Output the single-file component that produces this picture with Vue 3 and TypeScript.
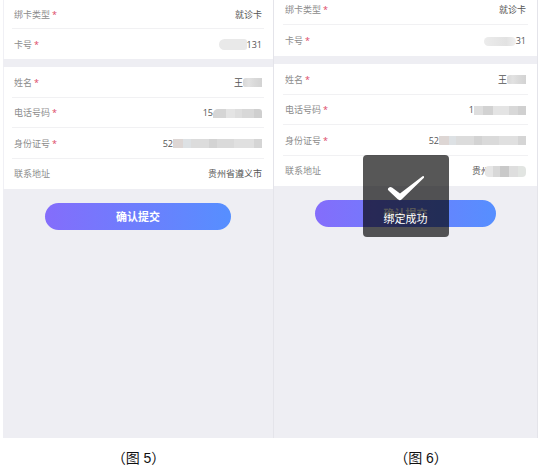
<script setup lang="ts">
interface Field {
  label: string
  value: string
  required?: boolean
  mask?: string
  maskWidth?: number
  maskFirst?: boolean
}

interface Screen {
  id: string
  caption: string
  card: Field[]
  person: Field[]
  toast?: string
}

const screens: Screen[] = [
  {
    id: 'left',
    caption: '（图 5）',
    card: [
      { label: '绑卡类型', value: '就诊卡', required: true },
      { label: '卡号', value: '131', required: true, mask: 'cloud', maskWidth: 28, maskFirst: true },
    ],
    person: [
      { label: '姓名', value: '王', required: true, mask: 'short', maskWidth: 19 },
      { label: '电话号码', value: '15', required: true, mask: 'round', maskWidth: 49 },
      { label: '身份证号', value: '52', required: true, mask: 'long', maskWidth: 89 },
      { label: '联系地址', value: '贵州省遵义市' },
    ],
  },
  {
    id: 'right',
    caption: '（图 6）',
    card: [
      { label: '绑卡类型', value: '就诊卡', required: true },
      { label: '卡号', value: '31', required: true, mask: 'pill', maskWidth: 32, maskFirst: true },
    ],
    person: [
      { label: '姓名', value: '王', required: true, mask: 'short', maskWidth: 19 },
      { label: '电话号码', value: '1', required: true, mask: 'mid', maskWidth: 52 },
      { label: '身份证号', value: '52', required: true, mask: 'long', maskWidth: 87 },
      { label: '联系地址', value: '贵州', mask: 'address', maskWidth: 41 },
    ],
    toast: '绑定成功',
  },
]
</script>

<template>
  <main class="page">
    <figure v-for="screen in screens" :key="screen.id" class="figure" :class="screen.id">
      <section class="screen">
        <dl v-for="(group, index) in [screen.card, screen.person]" :key="index" class="group" :class="index === 0 ? 'card' : 'person'">
          <div v-for="field in group" :key="field.label" class="row">
            <dt>{{ field.label }}<span v-if="field.required" class="star">*</span></dt>
            <dd :class="{ reverse: field.maskFirst }">
              <span>{{ field.value }}</span>
              <i v-if="field.mask" class="mask" :class="field.mask" :style="{ width: field.maskWidth + 'px' }"></i>
            </dd>
          </div>
        </dl>
        <button type="button" class="submit">确认提交</button>
        <div v-if="screen.toast" class="toast" role="status">
          <svg width="38" height="28" viewBox="0 0 38 28" aria-hidden="true">
            <path d="M1 13.5 Q2.5 11 5 12.5 L13 18.5 L35.5 1.2 Q37.5 .5 37 2.8 L14.5 24.5 Q12.5 26 10.5 24 L1.5 15.5 Q.5 14.5 1 13.5Z" fill="#fff" />
          </svg>
          <span>{{ screen.toast }}</span>
        </div>
      </section>
      <figcaption>{{ screen.caption }}</figcaption>
    </figure>
  </main>
</template>

<style>
body {
  margin: 0;
  background: #fff;
}
</style>

<style scoped>
.page {
  box-sizing: border-box;
  min-height: 100vh;
  padding: 0 2px 0 3px;
  display: grid;
  grid-template-columns: 271fr 264fr;
  font-family: "Open Sans", "Noto Sans CJK SC", sans-serif;
}

.figure {
  margin: 0;
  display: flex;
  flex-direction: column;
}

.screen {
  position: relative;
  flex: 1;
  display: flex;
  flex-direction: column;
  background: #eeeef3;
  border-right: 1px solid #e4e4ea;
}

.group {
  box-sizing: border-box;
  margin: 0;
  padding: 0 9px;
  display: flex;
  flex-direction: column;
  justify-content: flex-end;
  overflow: hidden;
  background: #fff;
}

.left .group {
  box-shadow: inset 1px 0 #f0f0f5;
}

.card {
  height: 59px;
  margin-bottom: 8px;
}

.right .card {
  height: 56px;
}

.person {
  height: 122px;
}

.row {
  box-sizing: border-box;
  flex: 0 0 30px;
  padding: 2px 2px 0;
  display: flex;
  align-items: center;
  justify-content: space-between;
  border-bottom: 1px solid #f1f1f3;
  font-size: 9px;
  line-height: 14px;
  white-space: nowrap;
}

.right .card .row {
  flex-basis: 31px;
}

.person .row {
  flex: 1;
}

.row:last-child {
  border-bottom-color: transparent;
}

dt {
  color: #8c8c8c;
}

.star {
  margin-left: 2px;
  color: #dc4763;
}

dd {
  margin: 0;
  display: flex;
  align-items: center;
  color: #555;
}

.reverse {
  flex-direction: row-reverse;
}

.mask {
  height: 9px;
  background: linear-gradient(90deg, #d8d8d8 0, #e2e2e2 30%, #dadada 60%, #d3d3d3);
}

.cloud {
  height: 11px;
  border-radius: 6px 3px 3px 6px;
  background: #e9e9e9;
}

.pill {
  border-radius: 5px;
  background: linear-gradient(90deg, #ececec, #e2e2e2 70%, #f0f0f0);
}

.short {
  border-radius: 3px 0 0 2px;
}

.round {
  border-radius: 5px 3px 0 0;
  background: linear-gradient(90deg, #d5d5d5 0 27%, #e4e4e4 27% 44%, #dedede 44% 60%, #d8d8d8 60% 84%, #cfcfcf 84%);
}

.mid {
  background: linear-gradient(90deg, #dedede 0 18%, #d2d2d2 18% 36%, #e4e4e4 36% 68%, #d8d8d8 68% 84%, #d0d0d0 84%);
}

.long {
  background: linear-gradient(90deg, #ddd6d4 0 11%, #dde1e4 11% 20%, #dcdcdc 20% 40%, #d3d3d3 40% 49%, #dadada 49% 69%, #e0e0e0 69% 91%, #d5d5d5 91%);
}

.address {
  height: 11px;
  margin-left: -5px;
  border-radius: 4px;
  background: linear-gradient(90deg, #e6e6e6 0 20%, #d8d8d8 20% 36%, #c9c9c9 36% 58%, #dedede 58% 80%, #e2e5e2 80%);
}

.submit {
  align-self: center;
  width: 69%;
  height: 27px;
  margin: 14px 0 0;
  padding: 0;
  border: 0;
  border-radius: 14px;
  background: linear-gradient(90deg, #846dfb, #568fff);
  color: #fff;
  font-family: inherit;
  font-size: 11px;
  font-weight: 700;
  line-height: 16px;
}

.toast {
  position: absolute;
  top: 155px;
  left: 50%;
  box-sizing: border-box;
  width: 86px;
  height: 82px;
  padding-top: 20px;
  transform: translateX(-50%);
  display: flex;
  flex-direction: column;
  align-items: center;
  gap: 8px;
  border-radius: 4px;
  background: rgba(0, 0, 0, 0.66);
  color: #fff;
  font-size: 11px;
  line-height: 16px;
}

figcaption {
  padding: 10px 0 2px;
  color: #111;
  font-family: "Liberation Sans", "Noto Sans CJK SC", sans-serif;
  font-size: 14px;
  line-height: 20px;
  text-align: center;
}

.right figcaption {
  padding-left: 30px;
}
</style>
